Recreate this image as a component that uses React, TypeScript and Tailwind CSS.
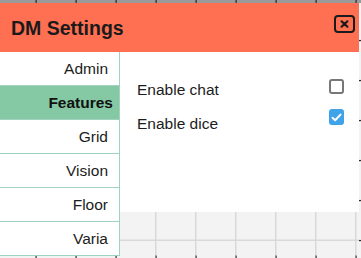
import React from "react";

const items = ["Admin", "Features", "Grid", "Vision", "Floor", "Varia"];

function Canvas() {
  const xs = [35, 75, 115, 155, 195, 235, 275, 315, 355];
  const ys = [40, 80, 120, 160, 200, 240];
  return (
    <svg className="absolute inset-0" width="361" height="258" viewBox="0 0 361 258">
      <rect x="0" y="0" width="361" height="258" fill="#f3f3f3" />
      {xs.map((x) => (
        <rect key={"v" + x} x={x} y="0" width="1.5" height="258" fill="#d9d9d9" />
      ))}
      {ys.map((y) => (
        <rect key={"h" + y} x="0" y={y - 0.5} width="361" height="1.5" fill="#d9d9d9" />
      ))}
      <rect x="0" y="0" width="361" height="3" fill="#9a9a9a" />
      {xs.map((x) => (
        <rect key={"t" + x} x={x + 0.5} y="0" width="1.2" height="3" fill="#2a2a2a" />
      ))}
      {xs.map((x) => (
        <rect key={"b" + x} x={x + 0.5} y="255.5" width="1.2" height="3" fill="#3a3a3a" />
      ))}
      {ys.map((y) => (
        <rect key={"r" + y} x="359" y={y} width="2" height="1.2" fill="#2a2a2a" />
      ))}
    </svg>
  );
}

function CloseIcon() {
  return (
    <svg width="21" height="18" viewBox="0 0 21 18">
      <rect x="1" y="1" width="19" height="16" rx="3" fill="none" stroke="#1a1a1a" strokeWidth="2" />
      <path d="M7.6 6.3 L13.4 11.7 M13.4 6.3 L7.6 11.7" stroke="#1a1a1a" strokeWidth="2.2" strokeLinecap="round" />
    </svg>
  );
}

export default function App() {
  return (
    <div
      className="relative w-[361px] h-[258px] overflow-hidden"
      style={{ fontFamily: '"Liberation Sans", Arial, sans-serif' }}
    >
      <Canvas />
      <div className="relative mt-[3px] w-[359px] flex flex-col">
        <div className="h-[49px] bg-[#ff7052] flex items-center justify-between pl-[11px] pr-[4px]">
          <span className="text-[19.5px] font-bold text-[#1a1a1a] leading-none mt-[3px]">DM Settings</span>
          <div className="mt-[-8px]">
            <CloseIcon />
          </div>
        </div>
        <div className="flex items-start">
          <div className="w-[120px] bg-white border-r border-[#9fd3c0] flex flex-col">
            {items.map((it) => {
              const active = it === "Features";
              return (
                <div
                  key={it}
                  className={
                    active
                      ? "h-[34px] border-b border-[#9fd3c0] bg-[#84c9a3] flex items-center justify-end pr-[6px] text-[15.5px] font-bold text-[#111]"
                      : "h-[34px] border-b border-[#9fd3c0] flex items-center justify-end pr-[11px] text-[15.5px] text-[#1c1c1c]"
                  }
                >
                  {it}
                </div>
              );
            })}
          </div>
          <div className="w-[239px] h-[160px] bg-white pt-[28px] pl-[17px] pr-[15px] flex flex-col">
            <div className="flex items-start justify-between h-[34px]">
              <span className="text-[15.5px] leading-[20px] text-[#1c1c1c]">Enable chat</span>
              <div className="mt-[-1px] w-[15px] h-[15px] rounded-[3px] border-2 border-[#777] bg-white" />
            </div>
            <div className="flex items-start justify-between h-[34px]">
              <span className="text-[15.5px] leading-[20px] text-[#1c1c1c]">Enable dice</span>
              <div className="mt-[-5px] w-[15px] h-[16px] rounded-[3px] bg-[#3fa3ea] flex items-center justify-center">
                <svg width="11" height="9" viewBox="0 0 11 9">
                  <path d="M1.5 4.8 L4.2 7.3 L9.5 1.6" fill="none" stroke="white" strokeWidth="2" strokeLinecap="round" strokeLinejoin="round" />
                </svg>
              </div>
            </div>
          </div>
        </div>
      </div>
    </div>
  );
}
